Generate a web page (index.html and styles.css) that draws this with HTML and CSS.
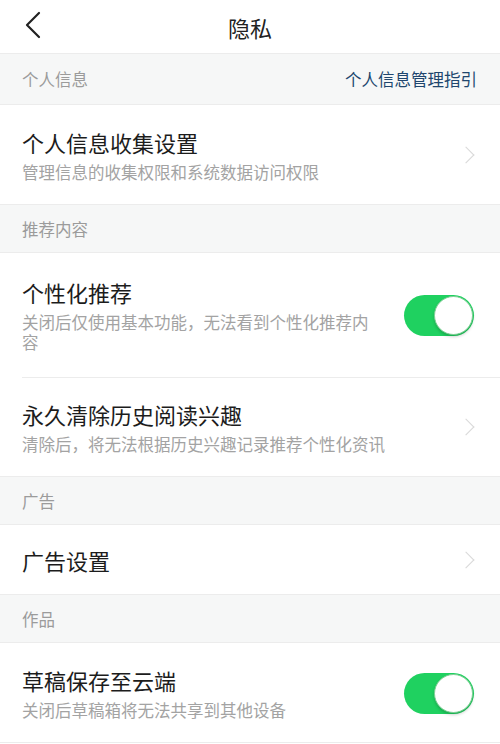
FILE: index.html
```html
<!DOCTYPE html>
<html lang="zh-CN">
<head>
  <meta charset="UTF-8" />
  <meta name="viewport" content="width=device-width, initial-scale=1.0" />
  <title>隐私</title>
  <link rel="stylesheet" href="styles.css">
</head>
<body>
  <div class="topbar">
    <span class="back">
      <svg width="18" height="28" viewBox="0 0 18 28"><path d="M15 2 L3 14 L15 26" fill="none" stroke="#222" stroke-width="2.2" stroke-linecap="round" stroke-linejoin="round"/></svg>
    </span>
    <h1>隐私</h1>
  </div>

  <div class="section-head first">
    <span>个人信息</span>
    <a class="guide">个人信息管理指引</a>
  </div>
  <div class="group">
    <div class="row">
      <div class="text">
        <div class="title">个人信息收集设置</div>
        <div class="sub">管理信息的收集权限和系统数据访问权限</div>
      </div>
      <span class="chev"></span>
    </div>
  </div>

  <div class="section-head"><span>推荐内容</span></div>
  <div class="group">
    <div class="row tall">
      <div class="text">
        <div class="title">个性化推荐</div>
        <div class="sub">关闭后仅使用基本功能，无法看到个性化推荐内容</div>
      </div>
      <span class="switch on"><span class="knob"></span></span>
    </div>
    <div class="row">
      <div class="text">
        <div class="title">永久清除历史阅读兴趣</div>
        <div class="sub">清除后，将无法根据历史兴趣记录推荐个性化资讯</div>
      </div>
      <span class="chev"></span>
    </div>
  </div>

  <div class="section-head"><span>广告</span></div>
  <div class="group">
    <div class="row short">
      <div class="text">
        <div class="title">广告设置</div>
      </div>
      <span class="chev"></span>
    </div>
  </div>

  <div class="section-head"><span>作品</span></div>
  <div class="group">
    <div class="row">
      <div class="text">
        <div class="title">草稿保存至云端</div>
        <div class="sub">关闭后草稿箱将无法共享到其他设备</div>
      </div>
      <span class="switch on"><span class="knob"></span></span>
    </div>
  </div>
</body>
</html>
```

FILE: styles.css
```css
body {
  margin: 0;
  background: #fff;
  font-family: "Noto Sans CJK SC", "Noto Sans", sans-serif;
  color: #1c1c1c;
  overflow: hidden;
}

.topbar {
  position: relative;
  height: 54px;
  display: flex;
  align-items: center;
  justify-content: center;
  background: #fff;
  border-bottom: 1px solid #ececec;
  box-sizing: border-box;
}

.topbar h1 {
  margin: 0;
  font-size: 22px;
  font-weight: 400;
  color: #222;
}

.back {
  position: absolute;
  left: 24px;
  top: 11px;
  display: flex;
}

.section-head {
  display: flex;
  justify-content: space-between;
  align-items: center;
  height: 48px;
  padding: 0 22px;
  box-sizing: border-box;
  background: #f6f7f7;
  border-bottom: 1px solid #ececec;
  font-size: 16.5px;
  color: #9b9b9b;
}

.section-head.first {
  height: 51px;
}

.guide {
  color: #20466e;
  font-size: 16.5px;
  margin-right: 1px;
}

.group {
  background: #fff;
  border-bottom: 1px solid #ececec;
}

.row {
  position: relative;
  display: flex;
  align-items: center;
  padding: 23px 22px 22px;
}

.row + .row::before {
  content: "";
  position: absolute;
  left: 22px;
  right: 0;
  top: 0;
  border-top: 1px solid #ececec;
}

.row.tall {
  padding: 25px 22px 25px;
}

.row.short {
  padding: 21px 22px 20px;
}

.text {
  flex: 1;
  padding-right: 24px;
}

.title {
  font-size: 22px;
  line-height: 28px;
  color: #1c1c1c;
}

.sub {
  margin-top: 6px;
  font-size: 16.5px;
  line-height: 20px;
  color: #a3a3a3;
}

.chev {
  width: 11px;
  height: 11px;
  border-top: 1.5px solid #d8d8d8;
  border-right: 1.5px solid #d8d8d8;
  transform: rotate(45deg);
  margin-right: 6px;
}

.switch {
  width: 70px;
  height: 41px;
  border-radius: 21px;
  background: #1fd160;
  display: flex;
  align-items: center;
  justify-content: flex-end;
  box-sizing: border-box;
  padding: 1px;
  margin-right: 4px;
  flex-shrink: 0;
}

.knob {
  width: 39px;
  height: 39px;
  border-radius: 50%;
  background: #fff;
  box-sizing: border-box;
  border: 1px solid #7fcf95;
  box-shadow: 0 2px 3px rgba(0, 0, 0, 0.18);
}
```
